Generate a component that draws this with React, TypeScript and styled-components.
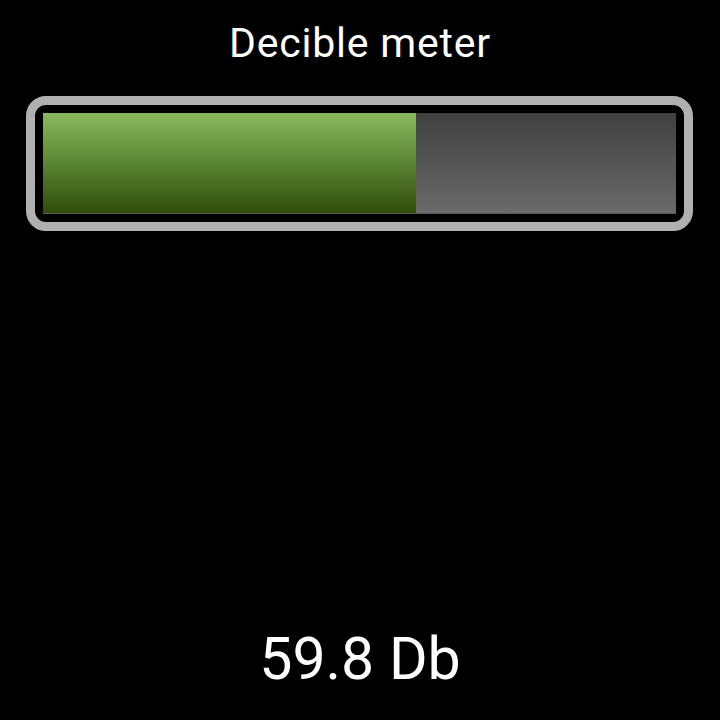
import React from "react";
import styled, { createGlobalStyle } from "styled-components";

const Global = createGlobalStyle`
  html, body { margin: 0; padding: 0; background: #000; }
  body { font-family: Roboto, "Liberation Sans", sans-serif; }
`;

const Screen = styled.div`
  width: 720px;
  height: 720px;
  background: #000;
  display: flex;
  flex-direction: column;
  align-items: center;
  box-sizing: border-box;
  padding: 19px 0 26px;
`;

const Title = styled.div`
  color: #fff;
  font-size: 41px;
  letter-spacing: 0.8px;
  line-height: 48px;
  height: 48px;
`;

const Meter = styled.div`
  margin-top: 29px;
  margin-left: 26px;
  align-self: flex-start;
  width: 667px;
  height: 135px;
  box-sizing: border-box;
  border: 9px solid #b0b0b0;
  border-radius: 20px;
  padding: 8px;
  background: #000;
  display: flex;
`;

const Track = styled.div`
  flex: 1;
  display: flex;
  background: linear-gradient(to bottom, #404040 0%, #6a6a6a 100%);
  border-bottom: 1px solid #5a5a5a;
`;

const Fill = styled.div`
  height: 100%;
  background: linear-gradient(to bottom, #8aba60 0%, #5f8a38 45%, #2f4d08 100%);
`;

const Value = styled.div`
  margin-top: auto;
  color: #fff;
  font-size: 59px;
  line-height: 70px;
  height: 70px;
`;

export default function App() {
  const fraction = 374 / 634;
  return (
    <>
      <Global />
      <Screen>
        <Title>Decible meter</Title>
        <Meter>
          <Track>
            <Fill style={{ width: `${fraction * 100}%` }} />
          </Track>
        </Meter>
        <Value>59.8 Db</Value>
      </Screen>
    </>
  );
}
